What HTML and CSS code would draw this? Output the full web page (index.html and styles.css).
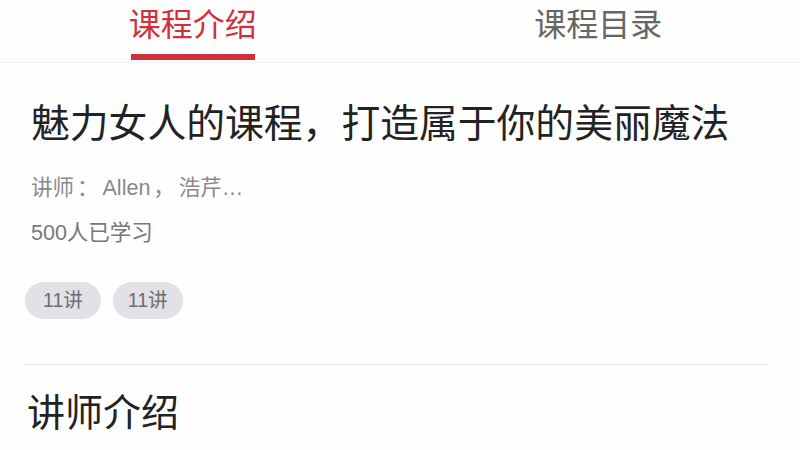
FILE: index.html
```html
<!DOCTYPE html>
<html lang="zh">
<head>
<meta charset="utf-8">
<link rel="stylesheet" href="styles.css">
</head>
<body>
<div class="page">
  <nav class="tabs">
    <div class="tab active"><span class="tab-label">课程介绍</span></div>
    <div class="tab"><span class="tab-label">课程目录</span></div>
  </nav>
  <section class="intro">
    <h1 class="title">魅力女人的课程，打造属于你的美丽魔法</h1>
    <p class="meta">讲师<span class="punct">：</span>Allen<span class="punct">，</span>浩芹…</p>
    <p class="meta count">500人已学习</p>
    <div class="tags">
      <span class="tag tag-wide">11讲</span>
      <span class="tag">11讲</span>
    </div>
  </section>
  <hr class="divider">
  <h2 class="section-title">讲师介绍</h2>
</div>
</body>
</html>
```
FILE: styles.css
```css
* { box-sizing: border-box; }
html, body { margin: 0; padding: 0; background: #fefefe; }
body {
  font-family: "Noto Sans CJK SC", "Noto Sans", sans-serif;
  width: 800px;
  height: 450px;
  overflow: hidden;
}
.tabs {
  display: flex;
  height: 63px;
  border-bottom: 1px solid #f2f0f4;
}
.tab {
  flex: 1;
  display: flex;
  justify-content: center;
}
.tab:first-child { padding-right: 20px; }
.tab:last-child { padding-right: 9px; }
.tab-label {
  position: relative;
  font-size: 32px;
  line-height: 45px;
  color: #666;
}
.tab.active .tab-label { color: #d22f3c; }
.tab.active .tab-label::after {
  content: "";
  position: absolute;
  left: 2px;
  right: 2px;
  top: 54px;
  height: 6px;
  background: #d22f3c;
}
.intro {
  padding: 0 0 0 31px;
}
.title {
  margin: 32px 0 0;
  font-size: 38.8px;
  font-weight: 400;
  line-height: 50px;
  color: #222;
}
.meta {
  margin: 0;
  font-family: "Liberation Sans", "Noto Sans CJK SC", sans-serif;
  font-size: 21.5px;
  line-height: 45px;
  color: #8a8a8a;
}
.meta:first-of-type { margin-top: 18px; }
.punct {
  font-family: "Noto Sans CJK SC", sans-serif;
  margin: 0 4px 0 3px;
}
.count { color: #777; }
.tags {
  display: flex;
  gap: 12px;
  margin-top: 26px;
  margin-left: -6px;
}
.tag {
  height: 37px;
  padding: 0 15px;
  border-radius: 19px;
  background: #e3e0e7;
  color: #6e6e6e;
  font-family: "Liberation Sans", "Noto Sans CJK SC", sans-serif;
  font-size: 19.5px;
  line-height: 37px;
}
.tag-wide { padding: 0 18px; }
.divider {
  margin: 45px 32px 0 25px;
  border: none;
  border-top: 1px solid #e9e5ec;
}
.section-title {
  margin: 20px 0 0 27px;
  font-size: 38px;
  font-weight: 400;
  line-height: 50px;
  color: #222;
}
```
